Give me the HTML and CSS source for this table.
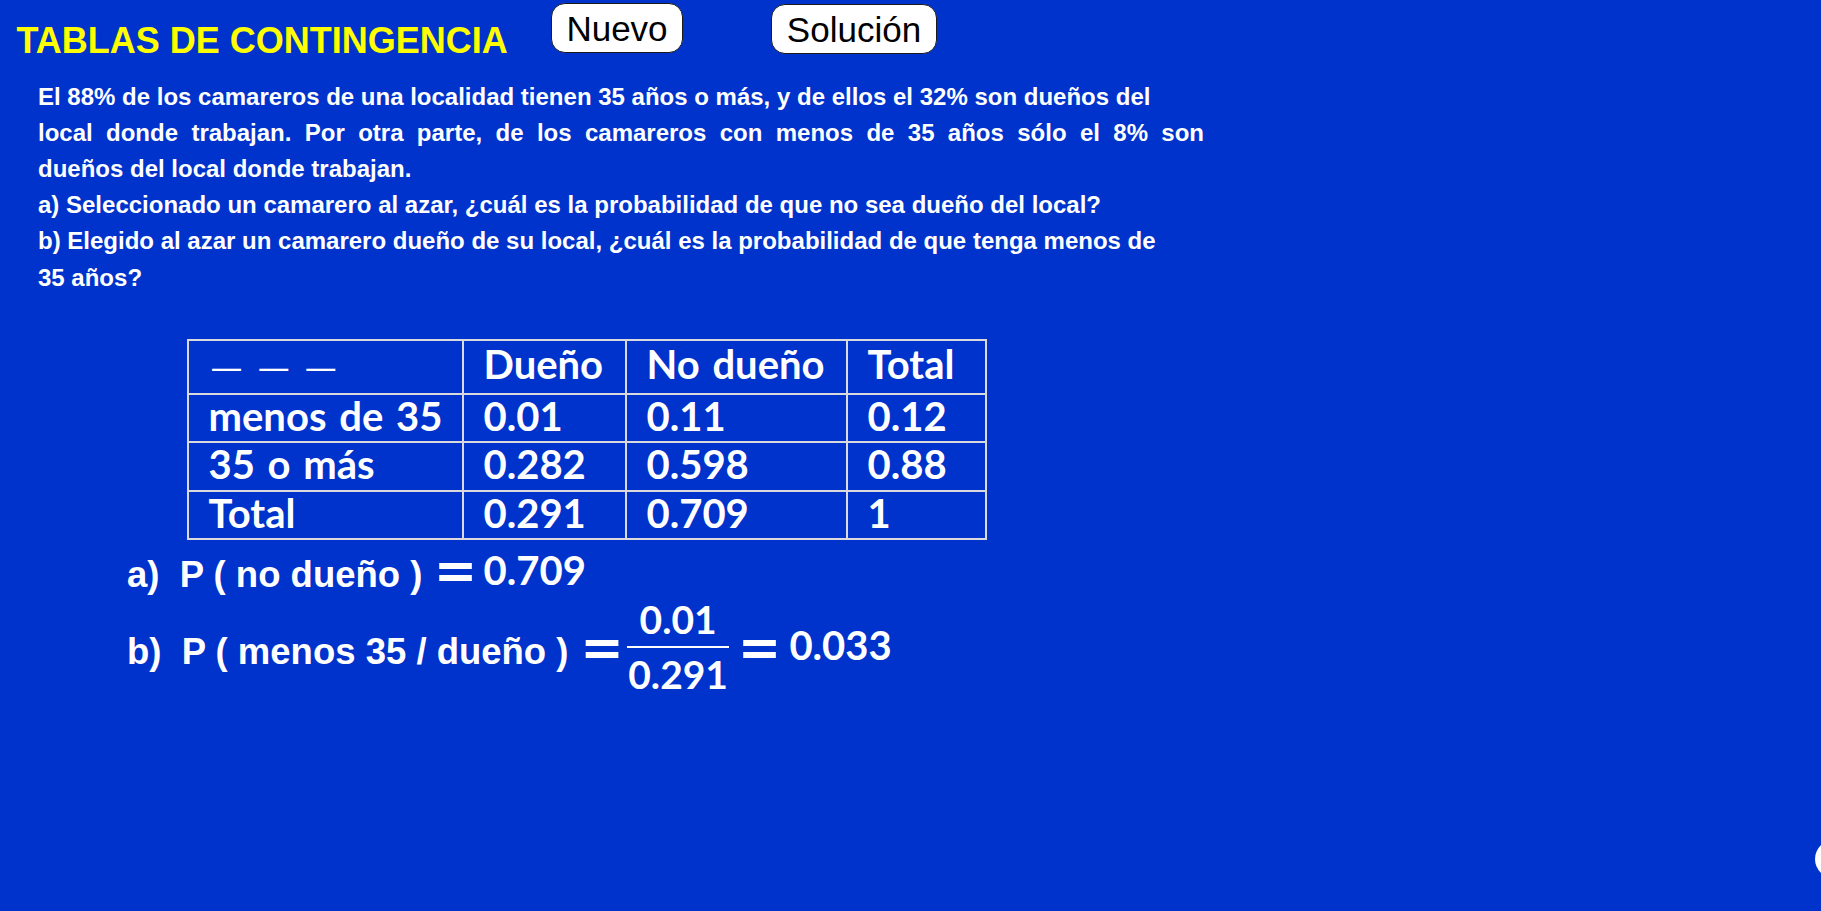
FILE: index.html
```html
<!DOCTYPE html>
<html lang="es">
<head>
<meta charset="utf-8">
<title>Tablas de contingencia</title>
<link rel="stylesheet" href="styles.css">
</head>
<body>
<div class="app">
  <header class="top">
    <h1 class="title">TABLAS DE CONTINGENCIA</h1>
    <button class="btn btn-nuevo">Nuevo</button>
    <button class="btn btn-sol">Solución</button>
  </header>

  <div class="problem">
    <div class="line">El 88% de los camareros de una localidad tienen 35 años o más, y de ellos el 32% son dueños del</div>
    <div class="line just">local donde trabajan. Por otra parte, de los camareros con menos de 35 años sólo el 8% son</div>
    <div class="line">dueños del local donde trabajan.</div>
    <div class="line">a) Seleccionado un camarero al azar, ¿cuál es la probabilidad de que no sea dueño del local?</div>
    <div class="line">b) Elegido al azar un camarero dueño de su local, ¿cuál es la probabilidad de que tenga menos de</div>
    <div class="line">35 años?</div>
  </div>

  <table class="ct">
    <tr class="rh">
      <td class="c1"><span class="dashes">— — —</span></td>
      <td class="c2">Dueño</td>
      <td class="c3">No dueño</td>
      <td class="c4">Total</td>
    </tr>
    <tr class="r1">
      <td>menos de 35</td>
      <td>0.01</td>
      <td>0.11</td>
      <td>0.12</td>
    </tr>
    <tr class="r2">
      <td>35 o más</td>
      <td>0.282</td>
      <td>0.598</td>
      <td>0.88</td>
    </tr>
    <tr class="r3">
      <td>Total</td>
      <td>0.291</td>
      <td>0.709</td>
      <td>1</td>
    </tr>
  </table>

  <div class="answers">
    <div class="ans ans-a">a)  P ( no dueño )<span class="eq eq-a1">=</span><span class="num-val val-a">0.709</span></div>
    <div class="ans ans-b">b)  P ( menos 35 / dueño )<span class="eq eq-b1">=</span><span class="frac"><span class="fnum">0.01</span><span class="fbar"></span><span class="fden">0.291</span></span><span class="eq eq-b2">=</span><span class="num-val val-b">0.033</span></div>
  </div>

  <div class="corner"></div>
</div>
</body>
</html>
```
FILE: styles.css
```css
body {
  margin: 0;
  background: #0033cc;
  color: #ffffff;
  font-family: "Liberation Sans", Arial, sans-serif;
}

.app {
  position: relative;
  width: 1821px;
  height: 911px;
  overflow: hidden;
  background: #0033cc;
}

/* header */
.top {
  display: flex;
  align-items: flex-start;
  height: 60px;
}

.title {
  margin: 22.5px 0 0 16.5px;
  width: 534.5px;
  flex: 0 0 auto;
  font-size: 36px;
  line-height: 36px;
  font-weight: 700;
  color: #ffff00;
  white-space: nowrap;
}

.btn {
  box-sizing: border-box;
  flex: 0 0 auto;
  height: 50px;
  padding: 0;
  background: #ffffff;
  color: #000000;
  border: 1.5px solid #1a1a1a;
  border-radius: 14px;
  font-family: "Liberation Sans", Arial, sans-serif;
  font-size: 35px;
  line-height: 47px;
  text-align: center;
}

.btn-nuevo {
  width: 132px;
  margin-top: 3px;
}

.btn-sol {
  width: 166px;
  margin-top: 4px;
  margin-left: 88px;
}

/* problem statement */
.problem {
  padding: 18.5px 0 0 38px;
  width: 1166px;
  font-size: 24px;
  line-height: 36.2px;
  font-weight: 700;
}

.line {
  white-space: nowrap;
}

.line.just {
  white-space: normal;
  text-align: justify;
  text-align-last: justify;
}

/* contingency table */
.ct {
  margin: 43.3px 0 0 187px;
  border-collapse: separate;
  border-spacing: 0;
  table-layout: fixed;
  width: 800px;
  border-top: 2px solid #d9d9de;
  border-left: 2px solid #d9d9de;
  font-family: Lato, "Open Sans", sans-serif;
  font-weight: 700;
  font-size: 40px;
  word-spacing: 3px;
  color: #ffffff;
}

.ct td {
  box-sizing: border-box;
  border-right: 2px solid #d9d9de;
  border-bottom: 2px solid #d9d9de;
  padding: 1px 0 0 19.5px;
  line-height: 40px;
  vertical-align: top;
  white-space: nowrap;
}

.ct .c1 { width: 275px; }
.ct .c2 { width: 163px; }
.ct .c3 { width: 221px; }
.ct .c4 { width: 139px; }

.ct .rh { height: 54px; }
.ct .rh td { padding-top: 3px; }
.ct .r1 { height: 48px; }
.ct .r2 { height: 49px; }
.ct .r3 { height: 48px; }

.dashes {
  font-family: "DejaVu Sans", sans-serif;
  font-weight: 400;
  font-size: 32px;
  word-spacing: 5px;
  padding-left: 2px;
  vertical-align: 0;
}

/* answers */
.answers {
  margin: 14.5px 0 0 127px;
  font-size: 36.5px;
  font-weight: 700;
}

.ans {
  line-height: 40px;
  white-space: pre;
}

.ans-b {
  margin-top: 4px;
}

.eq {
  font-family: "DejaVu Sans", sans-serif;
  font-weight: 700;
  font-size: 52px;
  line-height: 0;
  vertical-align: -1px;
}

.eq-a1 { margin-left: 11.3px; }
.eq-b1 { margin-left: 11.8px; }
.eq-b2 { margin-left: 8.5px; }

.num-val {
  font-family: Lato, "Open Sans", sans-serif;
  font-weight: 700;
  font-size: 40px;
  line-height: 0;
}

.val-a {
  margin-left: 6.3px;
  vertical-align: 2px;
}

.val-b {
  margin-left: 8.2px;
  vertical-align: 4px;
}

.frac {
  display: inline-block;
  width: 102px;
  margin-left: 3.3px;
  vertical-align: -25px;
  text-align: center;
  font-family: Lato, "Open Sans", sans-serif;
  font-weight: 700;
  font-size: 39px;
  line-height: 40px;
}

.fnum,
.fden {
  display: block;
}

.fbar {
  display: block;
  height: 2px;
  margin: 7.5px 0 5.5px;
  background: #ffffff;
}

/* round control peeking at the bottom-right edge */
.corner {
  position: absolute;
  left: 1815px;
  top: 840px;
  width: 38px;
  height: 38px;
  border-radius: 50%;
  background: #ffffff;
}
```
